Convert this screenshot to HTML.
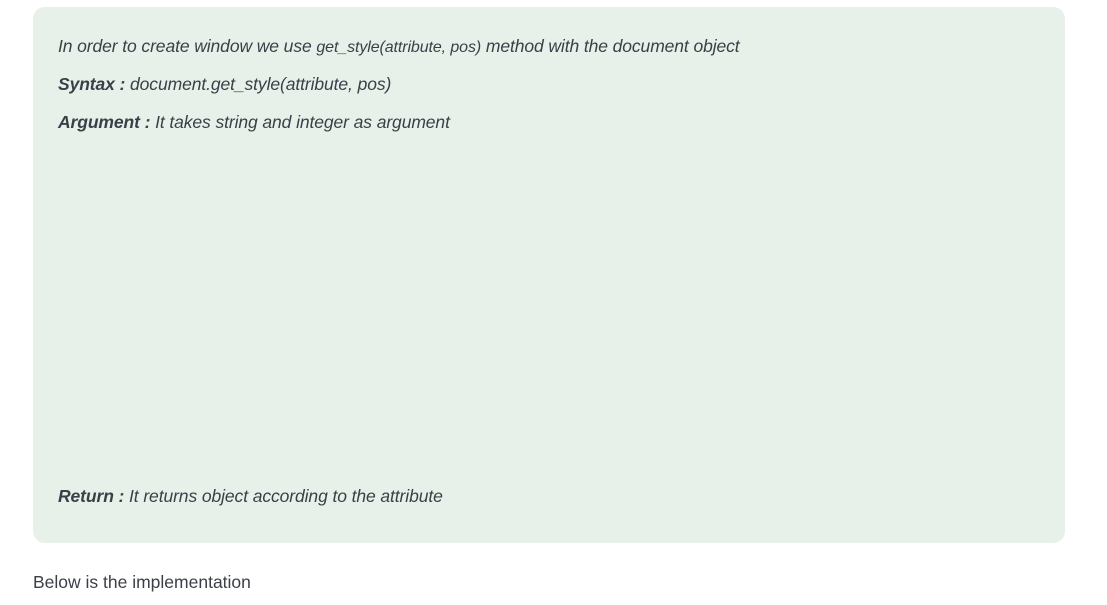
<!DOCTYPE html>
<html><head><meta charset="utf-8"><style>
html,body{margin:0;padding:0;background:#fff;width:1107px;height:605px;overflow:hidden;font-family:"Liberation Sans",sans-serif;color:#3b3f48}
.box{position:absolute;left:33px;top:7px;width:1032px;height:536px;background:#e7f1ea;border-radius:12px}
.l{position:absolute;left:58px;font-style:italic;font-size:17.5px;white-space:nowrap;letter-spacing:-0.1px}
.l b{font-weight:bold}
.sm{font-size:16px}
.foot{position:absolute;left:33px;top:572px;font-size:17.5px}
</style></head><body>
<div class="box"></div>
<div class="l" style="top:36px">In order to create window we use <span class="sm">get_style(attribute, pos)</span> method with the document object</div>
<div class="l" style="top:74px"><b>Syntax :</b> document.get_style(attribute, pos)</div>
<div class="l" style="top:112px"><b>Argument :</b> It takes string and integer as argument</div>
<div class="l" style="top:486px"><b>Return :</b> It returns object according to the attribute</div>
<div class="foot">Below is the implementation</div>
</body></html>
